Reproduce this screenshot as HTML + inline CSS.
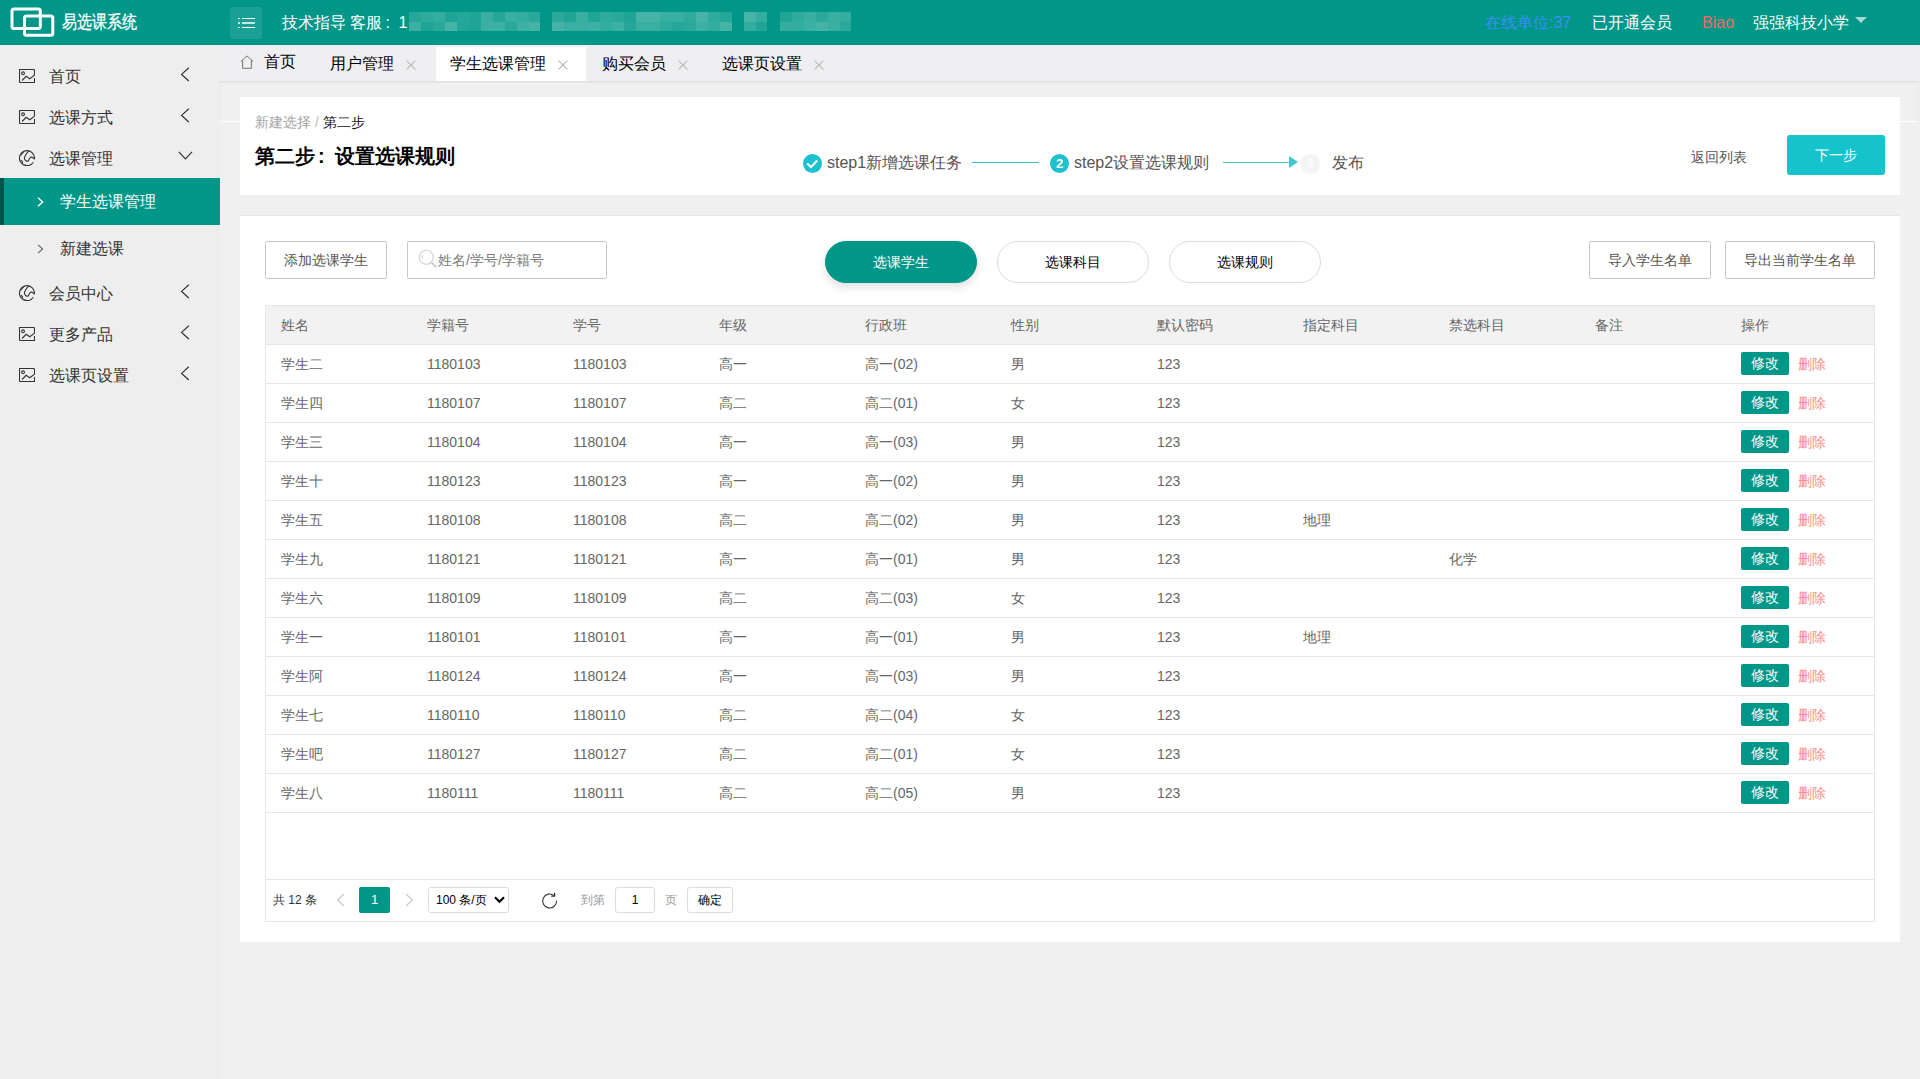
<!DOCTYPE html>
<html lang="zh">
<head>
<meta charset="utf-8">
<title>易选课系统</title>
<style>
*{box-sizing:border-box;margin:0;padding:0}
html,body{width:1920px;height:1079px;overflow:hidden}
body{font-family:"Liberation Sans",sans-serif;font-size:14px;color:#333;background:#f0f0f0;position:relative}
.abs{position:absolute}
/* header */
#hdr{position:absolute;left:0;top:0;width:1920px;height:45px;background:#009688;color:#fff}
#hdr .t{position:absolute;white-space:nowrap;line-height:20px}
#menuBtn{position:absolute;left:230px;top:7px;width:32px;height:32px;border-radius:3px;background:#1aa094}
#mos i{position:absolute;display:block}
/* sidebar */
#side{position:absolute;left:0;top:45px;width:220px;height:1034px;background:#eeeeee}
.mi{position:absolute;left:0;width:220px;height:41px;font-size:16px;color:#333;line-height:41px}
.mi .tx{position:absolute;left:49px;top:1px;white-space:nowrap}
.mi svg{position:absolute}
.si{position:absolute;left:0;width:220px;height:47px;font-size:16px;line-height:47px;color:#333}
.si .tx{position:absolute;left:60px;top:0;white-space:nowrap}
.si.act{background:#009688;color:#fff;border-left:4px solid #00544b}
.si.act .tx{left:56px}
/* tabs */
#tabs{position:absolute;left:220px;top:45px;width:1700px;height:36px;background:#efeff1;box-shadow:0 1px 2px rgba(0,0,0,.10);clip-path:inset(0 0 -5px 0)}
.tab{position:absolute;top:2px;height:34px;font-size:16px;line-height:34px;color:#000;white-space:nowrap}
.tab.act{background:#fff}
.tab .tx{position:absolute;top:0}
.tab svg{position:absolute}
.stx{top:55px;font-size:16px;color:#555;line-height:22px;white-space:nowrap}
/* cards */
.card{position:absolute;background:#fff}
.btnp{position:absolute;height:38px;line-height:36px;border:1px solid #c9c9c9;background:#fff;color:#555;font-size:14px;text-align:center;border-radius:2px;white-space:nowrap}
.pill{position:absolute;top:241px;width:152px;height:42px;border-radius:21px;line-height:40px;text-align:center;font-size:14px;border:1px solid #dcdcdc;background:#fff;color:#000}
.pill.on{background:#009688;border-color:#009688;color:#fff;box-shadow:0 4px 10px rgba(0,0,0,.13)}
/* table */
#tbl{position:absolute;left:265px;top:305px;width:1610px;height:617px;border:1px solid #e6e6e6;background:#fff}
#thead{position:absolute;left:0;top:0;width:1608px;height:39px;background:#f2f2f2;border-bottom:1px solid #e6e6e6}
.row{position:absolute;left:0;width:1608px;height:39px;border-bottom:1px solid #e6e6e6;color:#666;font-size:14px;line-height:38px}
.row span,#thead span{position:absolute;top:0;white-space:nowrap}
#thead{color:#666;font-size:14px;line-height:38px}
.c1{left:15px}.c2{left:161px}.c3{left:307px}.c4{left:453px}.c5{left:599px}.c6{left:745px}.c7{left:891px}.c8{left:1037px}.c9{left:1183px}.c10{left:1329px}.c11{left:1475px}
.edit{position:absolute;left:1475px;top:7px;width:48px;height:23px;background:#009688;color:#fff;border-radius:2px;font-size:14px;line-height:23px;text-align:center}
.del{position:absolute;left:1532px;top:0;color:#fb8b8b;font-size:14px}
#pager{position:absolute;left:0;top:573px;width:1608px;height:42px;border-top:1px solid #e6e6e6;font-size:12px;color:#333}
#pager .p{position:absolute;white-space:nowrap}
</style>
</head>
<body>
<!-- HEADER -->
<div id="hdr">
  <svg class="abs" style="left:9px;top:6px" width="48" height="32" viewBox="0 0 48 32">
    <rect x="3" y="2.900" width="28.300" height="19.600" rx="2" fill="none" stroke="#fff" stroke-width="3"/>
    <rect x="15.500" y="10" width="28.300" height="19.300" rx="2" fill="none" stroke="#fff" stroke-width="3"/>
  </svg>
  <div class="t" style="left:62px;top:11px;font-size:18px;transform:scaleX(.833);transform-origin:0 0;line-height:22px;-webkit-text-stroke:.3px #fff">易选课系统</div>
  <div id="menuBtn">
    <svg class="abs" style="left:8px;top:10px" width="17" height="12" viewBox="0 0 17 12"><g stroke="#fff" stroke-width="1"><path d="M0 1.500h2M4 1.500h13M0 10.500h2M4 10.500h13"/><path d="M0 6h2M4 6h13" stroke-width="1.700"/></g></svg>
  </div>
  <div class="t" style="left:282px;top:13px;font-size:16px">技术指导 客服<span style="display:inline-block;width:16px;padding-left:3px">:</span>1</div>
  <div id="mos"><i style="left:409px;top:12px;width:12px;height:10px;background:#24a698"></i><i style="left:409px;top:22px;width:12px;height:9px;background:#3bb0a3"></i><i style="left:421px;top:12px;width:12px;height:10px;background:#2fab9d"></i><i style="left:421px;top:22px;width:12px;height:9px;background:#1fa496"></i><i style="left:433px;top:12px;width:12px;height:10px;background:#33ad9f"></i><i style="left:433px;top:22px;width:12px;height:9px;background:#2aa99b"></i><i style="left:445px;top:12px;width:12px;height:10px;background:#1fa496"></i><i style="left:445px;top:22px;width:12px;height:9px;background:#45b4a7"></i><i style="left:457px;top:12px;width:12px;height:10px;background:#24a698"></i><i style="left:457px;top:22px;width:12px;height:9px;background:#24a698"></i><i style="left:469px;top:12px;width:12px;height:10px;background:#1fa496"></i><i style="left:469px;top:22px;width:12px;height:9px;background:#1fa496"></i><i style="left:481px;top:12px;width:12px;height:10px;background:#38afa1"></i><i style="left:481px;top:22px;width:12px;height:9px;background:#3bb0a3"></i><i style="left:493px;top:12px;width:12px;height:10px;background:#24a698"></i><i style="left:493px;top:22px;width:12px;height:9px;background:#3bb0a3"></i><i style="left:505px;top:12px;width:12px;height:10px;background:#38afa1"></i><i style="left:505px;top:22px;width:12px;height:9px;background:#2aa99b"></i><i style="left:517px;top:12px;width:12px;height:10px;background:#33ad9f"></i><i style="left:517px;top:22px;width:12px;height:9px;background:#3bb0a3"></i><i style="left:529px;top:12px;width:11px;height:10px;background:#2aa99b"></i><i style="left:529px;top:22px;width:11px;height:9px;background:#45b4a7"></i><i style="left:552px;top:12px;width:12px;height:10px;background:#2aa99b"></i><i style="left:552px;top:22px;width:12px;height:9px;background:#45b4a7"></i><i style="left:564px;top:12px;width:12px;height:10px;background:#1fa496"></i><i style="left:564px;top:22px;width:12px;height:9px;background:#38afa1"></i><i style="left:576px;top:12px;width:12px;height:10px;background:#38afa1"></i><i style="left:576px;top:22px;width:12px;height:9px;background:#38afa1"></i><i style="left:588px;top:12px;width:12px;height:10px;background:#1fa496"></i><i style="left:588px;top:22px;width:12px;height:9px;background:#3bb0a3"></i><i style="left:600px;top:12px;width:12px;height:10px;background:#2fab9d"></i><i style="left:600px;top:22px;width:12px;height:9px;background:#33ad9f"></i><i style="left:612px;top:12px;width:12px;height:10px;background:#2aa99b"></i><i style="left:612px;top:22px;width:12px;height:9px;background:#3bb0a3"></i><i style="left:624px;top:12px;width:12px;height:10px;background:#1fa496"></i><i style="left:624px;top:22px;width:12px;height:9px;background:#24a698"></i><i style="left:636px;top:12px;width:12px;height:10px;background:#45b4a7"></i><i style="left:636px;top:22px;width:12px;height:9px;background:#38afa1"></i><i style="left:648px;top:12px;width:12px;height:10px;background:#45b4a7"></i><i style="left:648px;top:22px;width:12px;height:9px;background:#38afa1"></i><i style="left:660px;top:12px;width:12px;height:10px;background:#38afa1"></i><i style="left:660px;top:22px;width:12px;height:9px;background:#2fab9d"></i><i style="left:672px;top:12px;width:12px;height:10px;background:#38afa1"></i><i style="left:672px;top:22px;width:12px;height:9px;background:#24a698"></i><i style="left:684px;top:12px;width:12px;height:10px;background:#2fab9d"></i><i style="left:684px;top:22px;width:12px;height:9px;background:#2aa99b"></i><i style="left:696px;top:12px;width:12px;height:10px;background:#45b4a7"></i><i style="left:696px;top:22px;width:12px;height:9px;background:#3bb0a3"></i><i style="left:708px;top:12px;width:12px;height:10px;background:#2fab9d"></i><i style="left:708px;top:22px;width:12px;height:9px;background:#33ad9f"></i><i style="left:720px;top:12px;width:12px;height:10px;background:#24a698"></i><i style="left:720px;top:22px;width:12px;height:9px;background:#45b4a7"></i><i style="left:744px;top:12px;width:12px;height:10px;background:#45b4a7"></i><i style="left:744px;top:22px;width:12px;height:9px;background:#33ad9f"></i><i style="left:756px;top:12px;width:11px;height:10px;background:#33ad9f"></i><i style="left:756px;top:22px;width:11px;height:9px;background:#1fa496"></i><i style="left:780px;top:12px;width:12px;height:10px;background:#1fa496"></i><i style="left:780px;top:22px;width:12px;height:9px;background:#33ad9f"></i><i style="left:792px;top:12px;width:12px;height:10px;background:#2fab9d"></i><i style="left:792px;top:22px;width:12px;height:9px;background:#33ad9f"></i><i style="left:804px;top:12px;width:12px;height:10px;background:#38afa1"></i><i style="left:804px;top:22px;width:12px;height:9px;background:#3bb0a3"></i><i style="left:816px;top:12px;width:12px;height:10px;background:#2aa99b"></i><i style="left:816px;top:22px;width:12px;height:9px;background:#45b4a7"></i><i style="left:828px;top:12px;width:12px;height:10px;background:#38afa1"></i><i style="left:828px;top:22px;width:12px;height:9px;background:#38afa1"></i><i style="left:840px;top:12px;width:11px;height:10px;background:#33ad9f"></i><i style="left:840px;top:22px;width:11px;height:9px;background:#2aa99b"></i></div>
  <div class="t" style="left:1485px;top:13px;font-size:16px;color:#3a8ff5">在线单位:37</div>
  <div class="t" style="left:1592px;top:13px;font-size:16px">已开通会员</div>
  <div class="t" style="left:1702px;top:13px;font-size:16px;color:#f46a5f">Biao</div>
  <div class="t" style="left:1753px;top:13px;font-size:16px">强强科技小学</div>
  <div class="abs" style="left:1855px;top:17px;width:0;height:0;border-left:6px solid transparent;border-right:6px solid transparent;border-top:6px solid #a6dad5"></div>
</div>

<!-- SIDEBAR -->
<div id="side">
  <div class="mi" style="top:10px"><svg style="left:19px;top:14px" width="16" height="14" viewBox="0 0 16 14" fill="none" stroke="#333" stroke-width="1.1"><path d="M15.5 6.300V1.500a1 1 0 0 0-1-1H.500v12a1 1 0 0 0 1 1h14V9"/><circle cx="4.050" cy="4.300" r="1.400"/><path d="M3.100 11.500L7.100 7.300l3.700 2.500 4.800-3.700"/></svg><span class="tx">首页</span><svg style="left:180px;top:12px" width="10" height="15" viewBox="0 0 10 15" fill="none" stroke="#333" stroke-width="1.2"><path d="M8.8 .8L1.6 7.4l7.2 6.6"/></svg></div>
  <div class="mi" style="top:51px"><svg style="left:19px;top:14px" width="16" height="14" viewBox="0 0 16 14" fill="none" stroke="#333" stroke-width="1.1"><path d="M15.5 6.300V1.500a1 1 0 0 0-1-1H.500v12a1 1 0 0 0 1 1h14V9"/><circle cx="4.050" cy="4.300" r="1.400"/><path d="M3.100 11.500L7.100 7.300l3.700 2.500 4.800-3.700"/></svg><span class="tx">选课方式</span><svg style="left:180px;top:12px" width="10" height="15" viewBox="0 0 10 15" fill="none" stroke="#333" stroke-width="1.2"><path d="M8.8 .8L1.6 7.4l7.2 6.6"/></svg></div>
  <div class="mi" style="top:92px"><svg style="left:19px;top:13px" width="16" height="16" viewBox="0 0 16 16" fill="none" stroke="#333" stroke-width="1.1"><path d="M15.4 9.3A7.5 7.5 0 1 0 14.3 12.2"/><path d="M9.8 1.2C7.5 3.4 5.6 6 5.4 8.5c.2 1.5 2 2.9 3.5 2.7.9-.7 1.1-1.6 1.4-2.5.7-1.1 1.300-1.700 2.100-1.600 1.200.3 2.200 1.100 3 1.800M5 1.300C4.600 2 4.200 2.400 3.800 2.700 3 3.600 2.200 4.400 1.700 5.200M1.700 10.300c.9.3 1.500.7 1.700 1.400.2.700.2 1.300.2 1.800"/></svg><span class="tx">选课管理</span><svg style="left:178px;top:14px" width="15" height="9" viewBox="0 0 15 9" fill="none" stroke="#333" stroke-width="1.2"><path d="M.8 .8l6.6 7L14 .8"/></svg></div>
  <div class="si act" style="top:133px"><svg style="position:absolute;left:33px;top:19px" width="7" height="10" viewBox="0 0 7 10" fill="none" stroke="#fff" stroke-width="1.3"><path d="M1 .8l4.6 4.2L1 9.2"/></svg><span class="tx">学生选课管理</span></div>
  <div class="si" style="top:180px"><svg style="position:absolute;left:37px;top:19px" width="7" height="10" viewBox="0 0 7 10" fill="none" stroke="#666" stroke-width="1.1"><path d="M1 .8l4.6 4.2L1 9.2"/></svg><span class="tx">新建选课</span></div>
  <div class="mi" style="top:227px"><svg style="left:19px;top:13px" width="16" height="16" viewBox="0 0 16 16" fill="none" stroke="#333" stroke-width="1.1"><path d="M15.4 9.3A7.5 7.5 0 1 0 14.3 12.2"/><path d="M9.8 1.2C7.5 3.4 5.6 6 5.4 8.5c.2 1.5 2 2.9 3.5 2.7.9-.7 1.1-1.6 1.4-2.5.7-1.1 1.300-1.700 2.100-1.600 1.200.3 2.200 1.100 3 1.800M5 1.300C4.600 2 4.200 2.400 3.800 2.700 3 3.600 2.200 4.400 1.700 5.200M1.700 10.300c.9.3 1.500.7 1.700 1.400.2.700.2 1.300.2 1.800"/></svg><span class="tx">会员中心</span><svg style="left:180px;top:12px" width="10" height="15" viewBox="0 0 10 15" fill="none" stroke="#333" stroke-width="1.2"><path d="M8.8 .8L1.6 7.4l7.2 6.6"/></svg></div>
  <div class="mi" style="top:268px"><svg style="left:19px;top:14px" width="16" height="14" viewBox="0 0 16 14" fill="none" stroke="#333" stroke-width="1.1"><path d="M15.5 6.300V1.500a1 1 0 0 0-1-1H.500v12a1 1 0 0 0 1 1h14V9"/><circle cx="4.050" cy="4.300" r="1.400"/><path d="M3.100 11.500L7.100 7.300l3.700 2.500 4.800-3.700"/></svg><span class="tx">更多产品</span><svg style="left:180px;top:12px" width="10" height="15" viewBox="0 0 10 15" fill="none" stroke="#333" stroke-width="1.2"><path d="M8.8 .8L1.6 7.4l7.2 6.6"/></svg></div>
  <div class="mi" style="top:309px"><svg style="left:19px;top:14px" width="16" height="14" viewBox="0 0 16 14" fill="none" stroke="#333" stroke-width="1.1"><path d="M15.5 6.300V1.500a1 1 0 0 0-1-1H.500v12a1 1 0 0 0 1 1h14V9"/><circle cx="4.050" cy="4.300" r="1.400"/><path d="M3.100 11.500L7.100 7.300l3.700 2.500 4.800-3.700"/></svg><span class="tx">选课页设置</span><svg style="left:180px;top:12px" width="10" height="15" viewBox="0 0 10 15" fill="none" stroke="#333" stroke-width="1.2"><path d="M8.8 .8L1.6 7.4l7.2 6.6"/></svg></div>
</div>

<!-- TABS -->
<div id="tabs">
  <div class="tab" style="left:6px;width:88px"><svg style="left:14px;top:8px" width="14" height="14" viewBox="0 0 14 14" fill="none" stroke="#666" stroke-width=".9"><path d="M.8 6.600L7 .900l6.200 5.700M2.600 5.400v7.900h8.800V5.400"/></svg><span class="tx" style="left:38px;top:-2px">首页</span></div>
  <div class="tab" style="left:96px;width:118px"><span class="tx" style="left:14px">用户管理</span><svg style="left:90px;top:13px" width="10" height="10" viewBox="0 0 10 10" stroke="#b9b9b9" stroke-width="1.1" fill="none"><path d="M.6 .6l8.8 8.8M9.4 .6L.6 9.4"/></svg></div>
  <div class="tab act" style="left:216px;width:150px"><span class="tx" style="left:14px">学生选课管理</span><svg style="left:122px;top:13px" width="10" height="10" viewBox="0 0 10 10" stroke="#b9b9b9" stroke-width="1.1" fill="none"><path d="M.6 .6l8.8 8.8M9.4 .6L.6 9.4"/></svg></div>
  <div class="tab" style="left:368px;width:118px"><span class="tx" style="left:14px">购买会员</span><svg style="left:90px;top:13px" width="10" height="10" viewBox="0 0 10 10" stroke="#b9b9b9" stroke-width="1.1" fill="none"><path d="M.6 .6l8.8 8.8M9.4 .6L.6 9.4"/></svg></div>
  <div class="tab" style="left:488px;width:134px"><span class="tx" style="left:14px">选课页设置</span><svg style="left:106px;top:13px" width="10" height="10" viewBox="0 0 10 10" stroke="#b9b9b9" stroke-width="1.1" fill="none"><path d="M.6 .6l8.8 8.8M9.4 .6L.6 9.4"/></svg></div>
</div>
<div class="abs" style="left:220px;top:82px;width:1699px;height:40px;border-left:1px solid #e9e9e9;border-right:1px solid #e9e9e9;border-bottom:1px solid #fff"></div>

<!-- CARD 1 -->
<div class="card" id="card1" style="left:240px;top:97px;width:1660px;height:98px">
  <div class="abs" style="left:15px;top:15px;font-size:14px;color:#a3a3a3;white-space:nowrap;line-height:20px">新建选择 <span style="color:#bbb">/</span> <span style="color:#111">第二步</span></div>
  <div class="abs" style="left:15px;top:46px;font-size:20px;font-weight:bold;color:#000;white-space:nowrap;line-height:26px">第二步<span style="display:inline-block;width:20px;padding-left:3px">:</span>设置选课规则</div>
  <div class="abs" style="left:562.500px;top:56.600px;width:19.600px;height:19.600px;border-radius:10px;background:#1cc2cd"><svg class="abs" style="left:2px;top:4.400px" width="14" height="12" viewBox="0 0 14 12" fill="none" stroke="#fff" stroke-width="2"><path d="M2.100 5.600l3.800 3.500L12.300 2.500"/></svg></div>
  <div class="abs stx" style="left:587px">step1新增选课任务</div>
  <div class="abs" style="left:732px;top:65px;width:67px;height:1px;background:#2cc5cf"></div>
  <div class="abs" style="left:810px;top:57px;width:19px;height:19px;border-radius:10px;background:#1fc1cc;color:#fff;font-size:13px;font-weight:bold;line-height:19px;text-align:center">2</div>
  <div class="abs stx" style="left:834px">step2设置选课规则</div>
  <div class="abs" style="left:983px;top:65px;width:67px;height:1px;background:#3ec9d2"></div>
  <div class="abs" style="left:1049px;top:59px;width:0;height:0;border-top:6px solid transparent;border-bottom:6px solid transparent;border-left:9px solid #3ec9d2"></div>
  <div class="abs" style="left:1060px;top:57px;width:20px;height:20px;border-radius:10px;background:#f4f4f4;color:#fbfbfb;font-size:13px;font-weight:bold;line-height:20px;text-align:center">3</div>
  <div class="abs stx" style="left:1092px">发布</div>
  <div class="abs" style="left:1451px;top:50px;font-size:14px;color:#555;line-height:20px;white-space:nowrap">返回列表</div>
  <div class="abs" style="left:1547px;top:38px;width:98px;height:40px;border-radius:3px;background:#15c3cd;color:#fff;font-size:14px;line-height:40px;text-align:center">下一步</div>
</div>

<!-- CARD 2 -->
<div class="card" id="card2" style="left:240px;top:215px;width:1660px;height:727px;border-top:1px solid #e6e6e6"></div>
<div class="btnp" style="left:265px;top:241px;width:122px">添加选课学生</div>
<div class="abs" style="left:407px;top:241px;width:200px;height:38px;border:1px solid #c9c9c9;background:#fff;border-radius:2px"></div>
<svg class="abs" style="left:418px;top:249px" width="20" height="20" viewBox="0 0 20 20" fill="none" stroke="#cfcfcf"><circle cx="8.3" cy="8.3" r="7" stroke-width="1.1"/><path d="M13.4 13.6l5 4.6" stroke-width="2"/><path d="M4.6 6.2c-.5 1.2-.5 2.4 0 3.6" stroke-width="1"/></svg>
<div class="abs" style="left:438px;top:241px;line-height:38px;color:#7a7a7a;font-size:14px;white-space:nowrap">姓名/学号/学籍号</div>
<div class="pill on" style="left:825px">选课学生</div>
<div class="pill" style="left:997px">选课科目</div>
<div class="pill" style="left:1169px">选课规则</div>
<div class="btnp" style="left:1589px;top:241px;width:122px">导入学生名单</div>
<div class="btnp" style="left:1725px;top:241px;width:150px">导出当前学生名单</div>

<!-- TABLE -->
<div id="tbl">
  <div id="thead"><span class="c1">姓名</span><span class="c2">学籍号</span><span class="c3">学号</span><span class="c4">年级</span><span class="c5">行政班</span><span class="c6">性别</span><span class="c7">默认密码</span><span class="c8">指定科目</span><span class="c9">禁选科目</span><span class="c10">备注</span><span class="c11">操作</span></div>
  <div class="row" style="top:39px"><span class="c1">学生二</span><span class="c2">1180103</span><span class="c3">1180103</span><span class="c4">高一</span><span class="c5">高一(02)</span><span class="c6">男</span><span class="c7">123</span><div class="edit">修改</div><span class="del">删除</span></div>
  <div class="row" style="top:78px"><span class="c1">学生四</span><span class="c2">1180107</span><span class="c3">1180107</span><span class="c4">高二</span><span class="c5">高二(01)</span><span class="c6">女</span><span class="c7">123</span><div class="edit">修改</div><span class="del">删除</span></div>
  <div class="row" style="top:117px"><span class="c1">学生三</span><span class="c2">1180104</span><span class="c3">1180104</span><span class="c4">高一</span><span class="c5">高一(03)</span><span class="c6">男</span><span class="c7">123</span><div class="edit">修改</div><span class="del">删除</span></div>
  <div class="row" style="top:156px"><span class="c1">学生十</span><span class="c2">1180123</span><span class="c3">1180123</span><span class="c4">高一</span><span class="c5">高一(02)</span><span class="c6">男</span><span class="c7">123</span><div class="edit">修改</div><span class="del">删除</span></div>
  <div class="row" style="top:195px"><span class="c1">学生五</span><span class="c2">1180108</span><span class="c3">1180108</span><span class="c4">高二</span><span class="c5">高二(02)</span><span class="c6">男</span><span class="c7">123</span><span class="c8">地理</span><div class="edit">修改</div><span class="del">删除</span></div>
  <div class="row" style="top:234px"><span class="c1">学生九</span><span class="c2">1180121</span><span class="c3">1180121</span><span class="c4">高一</span><span class="c5">高一(01)</span><span class="c6">男</span><span class="c7">123</span><span class="c9">化学</span><div class="edit">修改</div><span class="del">删除</span></div>
  <div class="row" style="top:273px"><span class="c1">学生六</span><span class="c2">1180109</span><span class="c3">1180109</span><span class="c4">高二</span><span class="c5">高二(03)</span><span class="c6">女</span><span class="c7">123</span><div class="edit">修改</div><span class="del">删除</span></div>
  <div class="row" style="top:312px"><span class="c1">学生一</span><span class="c2">1180101</span><span class="c3">1180101</span><span class="c4">高一</span><span class="c5">高一(01)</span><span class="c6">男</span><span class="c7">123</span><span class="c8">地理</span><div class="edit">修改</div><span class="del">删除</span></div>
  <div class="row" style="top:351px"><span class="c1">学生阿</span><span class="c2">1180124</span><span class="c3">1180124</span><span class="c4">高一</span><span class="c5">高一(03)</span><span class="c6">男</span><span class="c7">123</span><div class="edit">修改</div><span class="del">删除</span></div>
  <div class="row" style="top:390px"><span class="c1">学生七</span><span class="c2">1180110</span><span class="c3">1180110</span><span class="c4">高二</span><span class="c5">高二(04)</span><span class="c6">女</span><span class="c7">123</span><div class="edit">修改</div><span class="del">删除</span></div>
  <div class="row" style="top:429px"><span class="c1">学生吧</span><span class="c2">1180127</span><span class="c3">1180127</span><span class="c4">高二</span><span class="c5">高二(01)</span><span class="c6">女</span><span class="c7">123</span><div class="edit">修改</div><span class="del">删除</span></div>
  <div class="row" style="top:468px"><span class="c1">学生八</span><span class="c2">1180111</span><span class="c3">1180111</span><span class="c4">高二</span><span class="c5">高二(05)</span><span class="c6">男</span><span class="c7">123</span><div class="edit">修改</div><span class="del">删除</span></div>
  <div id="pager">
    <div class="p" style="left:7px;top:12px;line-height:16px">共 12 条</div>
    <svg class="abs" style="left:70px;top:13px" width="9" height="14" viewBox="0 0 9 14" fill="none" stroke="#c8c8c8" stroke-width="1.2"><path d="M8 1L1.6 7 8 13"/></svg>
    <div class="p" style="left:93px;top:7px;width:31px;height:26px;border-radius:2px;background:#009688;color:#fff;text-align:center;line-height:26px;font-size:13px">1</div>
    <svg class="abs" style="left:139px;top:13px" width="9" height="14" viewBox="0 0 9 14" fill="none" stroke="#c8c8c8" stroke-width="1.2"><path d="M1 1l6.4 6L1 13"/></svg>
    <div class="p" style="left:162px;top:7px;width:81px;height:26px;border:1px solid #dcdcdc;border-radius:3px;background:#fff;color:#000;line-height:24px;padding-left:7px">100 条/页</div>
    <svg class="abs" style="left:228px;top:16px" width="11" height="8" viewBox="0 0 11 8" fill="none" stroke="#000" stroke-width="2"><path d="M1 1.2l4.5 4.6L10 1.2"/></svg>
    <svg class="abs" style="left:275px;top:12px" width="18" height="18" viewBox="0 0 18 18" fill="none" stroke="#333" stroke-width="1.100"><path d="M15.600 8.600a7 7 0 1 1-2.400-4.900"/><path d="M13.6 .8v3.4h-3.4" stroke-width="1.2"/></svg>
    <div class="p" style="left:315px;top:12px;line-height:16px;color:#999">到第</div>
    <div class="p" style="left:349px;top:7px;width:40px;height:26px;border:1px solid #dcdcdc;border-radius:3px;background:#fff;color:#000;line-height:24px;text-align:center">1</div>
    <div class="p" style="left:399px;top:12px;line-height:16px;color:#999">页</div>
    <div class="p" style="left:421px;top:7px;width:46px;height:26px;border:1px solid #dcdcdc;border-radius:3px;background:#fff;color:#000;line-height:24px;text-align:center">确定</div>
  </div>
</div>
</body>
</html>
